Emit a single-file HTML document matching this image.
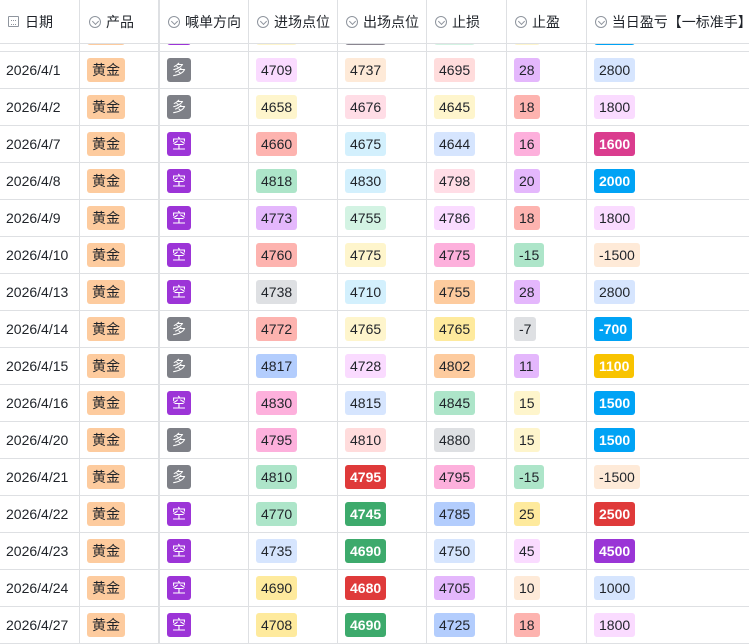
<!DOCTYPE html>
<html><head><meta charset="utf-8"><style>
*{box-sizing:border-box;margin:0;padding:0}
body{width:749px;height:644px;overflow:hidden;background:#fff;font-family:"Liberation Sans","Noto Sans CJK SC",sans-serif;font-size:14px;color:#1f2329;position:relative}
.row{position:absolute;left:0;width:749px;height:37px;border-top:1px solid #dee0e3;display:flex}
.c{height:36px;border-right:1px solid #dee0e3;display:flex;align-items:center;padding-left:7px;flex:none}
.c1{width:80px;padding-left:6px}.c2{width:80px;border-right:2px solid #dee0e3}.c3{width:89px}.c4{width:89px}.c5{width:89px}.c6{width:80px}.c7{width:80px}.c8{flex:1;border-right:none}
.t{display:inline-block;height:24px;line-height:24px;padding:0 5px;border-radius:3px;color:#1f2329;white-space:nowrap}
.s{color:#fff;font-weight:bold}
.A{background:#fadbff}.B{background:#feead8}.C{background:#ffdcdc}.Cp{background:#ffdde6}.D{background:#e4b7fc}.E{background:#d6e5fe}.F{background:#fef5cc}.G{background:#fdb3af}.H{background:#ade5c9}.I{background:#d3f0fd}.J{background:#fdb0dc}.K{background:#d3f3e3}.L{background:#dee0e3}.M{background:#fdcb9e}.N{background:#feea9d}.O{background:#b3cdfd}
.sp{background:#da3c8e}.sb{background:#00a3f5}.sr{background:#df3a3a}.sg{background:#3daa6c}.su{background:#9a35d6}.sy{background:#f8c300}
.duo{background:#7e8087;color:#fff}.kong{background:#9c34d7;color:#fff}
.hdr{position:absolute;top:0;left:0;width:749px;height:44px;background:#fff;border-bottom:1px solid #dee0e3;display:flex;z-index:2}
.hdr .c{height:43px;padding-left:8px;color:#1f2329}
.ic{display:inline-block;width:12px;height:12px;border:1px solid #8f959e;border-radius:50%;margin-right:5px;position:relative}
.ic:after{content:"";position:absolute;left:3px;top:2px;width:4px;height:4px;border-right:1px solid #8f959e;border-bottom:1px solid #8f959e;transform:rotate(45deg)}
.cal{display:inline-block;width:11px;height:11px;border:1px solid #8f959e;border-radius:1px;margin-right:6px;position:relative}
.cal:after{content:"";position:absolute;left:2px;top:3px;width:5px;height:3px;border-top:1px dotted #8f959e;border-bottom:1px dotted #8f959e}
</style></head><body>
<div class="hdr">
<div class="c c1"><span class="cal"></span>日期</div>
<div class="c c2" style="padding-left:9px"><span class="ic"></span>产品</div>
<div class="c c3"><span class="ic"></span>喊单方向</div>
<div class="c c4"><span class="ic"></span>进场点位</div>
<div class="c c5"><span class="ic"></span>出场点位</div>
<div class="c c6"><span class="ic"></span>止损</div>
<div class="c c7"><span class="ic"></span>止盈</div>
<div class="c c8"><span class="ic"></span>当日盈亏【一标准手】</div>
</div>
<div class="row" style="top:14px"><div class="c c1"></div><div class="c c2"><span class="t M">黄金</span></div><div class="c c3"><span class="t kong">空</span></div><div class="c c4"><span class="t F">4700</span></div><div class="c c5"><span class="t" style="background:#8a8590">4700</span></div><div class="c c6"><span class="t K">4700</span></div><div class="c c7"><span class="t F">10</span></div><div class="c c8"><span class="t sb">1000</span></div></div>

<div class="row" style="top:51px"><div class="c c1">2026/4/1</div><div class="c c2"><span class="t M">黄金</span></div><div class="c c3"><span class="t duo">多</span></div><div class="c c4"><span class="t A">4709</span></div><div class="c c5"><span class="t B">4737</span></div><div class="c c6"><span class="t C">4695</span></div><div class="c c7"><span class="t D">28</span></div><div class="c c8"><span class="t E">2800</span></div></div>
<div class="row" style="top:88px"><div class="c c1">2026/4/2</div><div class="c c2"><span class="t M">黄金</span></div><div class="c c3"><span class="t duo">多</span></div><div class="c c4"><span class="t F">4658</span></div><div class="c c5"><span class="t Cp">4676</span></div><div class="c c6"><span class="t F">4645</span></div><div class="c c7"><span class="t G">18</span></div><div class="c c8"><span class="t A">1800</span></div></div>
<div class="row" style="top:125px"><div class="c c1">2026/4/7</div><div class="c c2"><span class="t M">黄金</span></div><div class="c c3"><span class="t kong">空</span></div><div class="c c4"><span class="t G">4660</span></div><div class="c c5"><span class="t I">4675</span></div><div class="c c6"><span class="t E">4644</span></div><div class="c c7"><span class="t J">16</span></div><div class="c c8"><span class="t s sp">1600</span></div></div>
<div class="row" style="top:162px"><div class="c c1">2026/4/8</div><div class="c c2"><span class="t M">黄金</span></div><div class="c c3"><span class="t kong">空</span></div><div class="c c4"><span class="t H">4818</span></div><div class="c c5"><span class="t I">4830</span></div><div class="c c6"><span class="t Cp">4798</span></div><div class="c c7"><span class="t D">20</span></div><div class="c c8"><span class="t s sb">2000</span></div></div>
<div class="row" style="top:199px"><div class="c c1">2026/4/9</div><div class="c c2"><span class="t M">黄金</span></div><div class="c c3"><span class="t kong">空</span></div><div class="c c4"><span class="t D">4773</span></div><div class="c c5"><span class="t K">4755</span></div><div class="c c6"><span class="t A">4786</span></div><div class="c c7"><span class="t G">18</span></div><div class="c c8"><span class="t A">1800</span></div></div>
<div class="row" style="top:236px"><div class="c c1">2026/4/10</div><div class="c c2"><span class="t M">黄金</span></div><div class="c c3"><span class="t kong">空</span></div><div class="c c4"><span class="t G">4760</span></div><div class="c c5"><span class="t F">4775</span></div><div class="c c6"><span class="t J">4775</span></div><div class="c c7"><span class="t H">-15</span></div><div class="c c8"><span class="t B">-1500</span></div></div>
<div class="row" style="top:273px"><div class="c c1">2026/4/13</div><div class="c c2"><span class="t M">黄金</span></div><div class="c c3"><span class="t kong">空</span></div><div class="c c4"><span class="t L">4738</span></div><div class="c c5"><span class="t I">4710</span></div><div class="c c6"><span class="t M">4755</span></div><div class="c c7"><span class="t D">28</span></div><div class="c c8"><span class="t E">2800</span></div></div>
<div class="row" style="top:310px"><div class="c c1">2026/4/14</div><div class="c c2"><span class="t M">黄金</span></div><div class="c c3"><span class="t duo">多</span></div><div class="c c4"><span class="t G">4772</span></div><div class="c c5"><span class="t F">4765</span></div><div class="c c6"><span class="t N">4765</span></div><div class="c c7"><span class="t L">-7</span></div><div class="c c8"><span class="t s sb">-700</span></div></div>
<div class="row" style="top:347px"><div class="c c1">2026/4/15</div><div class="c c2"><span class="t M">黄金</span></div><div class="c c3"><span class="t duo">多</span></div><div class="c c4"><span class="t O">4817</span></div><div class="c c5"><span class="t A">4728</span></div><div class="c c6"><span class="t M">4802</span></div><div class="c c7"><span class="t D">11</span></div><div class="c c8"><span class="t s sy">1100</span></div></div>
<div class="row" style="top:384px"><div class="c c1">2026/4/16</div><div class="c c2"><span class="t M">黄金</span></div><div class="c c3"><span class="t kong">空</span></div><div class="c c4"><span class="t J">4830</span></div><div class="c c5"><span class="t E">4815</span></div><div class="c c6"><span class="t H">4845</span></div><div class="c c7"><span class="t F">15</span></div><div class="c c8"><span class="t s sb">1500</span></div></div>
<div class="row" style="top:421px"><div class="c c1">2026/4/20</div><div class="c c2"><span class="t M">黄金</span></div><div class="c c3"><span class="t duo">多</span></div><div class="c c4"><span class="t J">4795</span></div><div class="c c5"><span class="t C">4810</span></div><div class="c c6"><span class="t L">4880</span></div><div class="c c7"><span class="t F">15</span></div><div class="c c8"><span class="t s sb">1500</span></div></div>
<div class="row" style="top:458px"><div class="c c1">2026/4/21</div><div class="c c2"><span class="t M">黄金</span></div><div class="c c3"><span class="t duo">多</span></div><div class="c c4"><span class="t H">4810</span></div><div class="c c5"><span class="t s sr">4795</span></div><div class="c c6"><span class="t J">4795</span></div><div class="c c7"><span class="t H">-15</span></div><div class="c c8"><span class="t B">-1500</span></div></div>
<div class="row" style="top:495px"><div class="c c1">2026/4/22</div><div class="c c2"><span class="t M">黄金</span></div><div class="c c3"><span class="t kong">空</span></div><div class="c c4"><span class="t H">4770</span></div><div class="c c5"><span class="t s sg">4745</span></div><div class="c c6"><span class="t O">4785</span></div><div class="c c7"><span class="t N">25</span></div><div class="c c8"><span class="t s sr">2500</span></div></div>
<div class="row" style="top:532px"><div class="c c1">2026/4/23</div><div class="c c2"><span class="t M">黄金</span></div><div class="c c3"><span class="t kong">空</span></div><div class="c c4"><span class="t E">4735</span></div><div class="c c5"><span class="t s sg">4690</span></div><div class="c c6"><span class="t E">4750</span></div><div class="c c7"><span class="t A">45</span></div><div class="c c8"><span class="t s su">4500</span></div></div>
<div class="row" style="top:569px"><div class="c c1">2026/4/24</div><div class="c c2"><span class="t M">黄金</span></div><div class="c c3"><span class="t kong">空</span></div><div class="c c4"><span class="t N">4690</span></div><div class="c c5"><span class="t s sr">4680</span></div><div class="c c6"><span class="t D">4705</span></div><div class="c c7"><span class="t B">10</span></div><div class="c c8"><span class="t E">1000</span></div></div>
<div class="row" style="top:606px;border-bottom:1px solid #dee0e3;height:38px"><div class="c c1">2026/4/27</div><div class="c c2"><span class="t M">黄金</span></div><div class="c c3"><span class="t kong">空</span></div><div class="c c4"><span class="t N">4708</span></div><div class="c c5"><span class="t s sg">4690</span></div><div class="c c6"><span class="t O">4725</span></div><div class="c c7"><span class="t G">18</span></div><div class="c c8"><span class="t A">1800</span></div></div>
</body></html>
